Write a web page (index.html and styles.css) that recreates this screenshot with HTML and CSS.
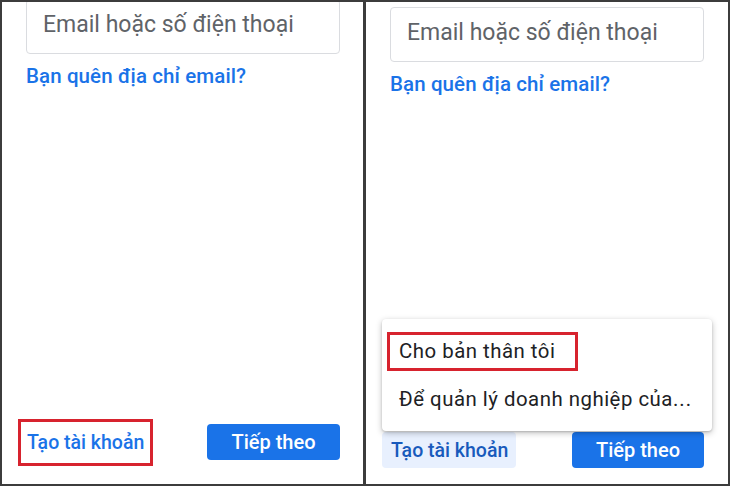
FILE: index.html
```html
<!DOCTYPE html>
<html lang="vi">
<head>
<meta charset="utf-8">
<link rel="stylesheet" href="styles.css">
</head>
<body>
<div class="frame">
  <section class="panel panel-left">
    <div class="field"><span class="placeholder">Email hoặc số điện thoại</span></div>
    <a class="forgot">Bạn quên địa chỉ email?</a>
    <div class="actions">
      <span class="create marked">Tạo tài khoản</span>
      <span class="next">Tiếp theo</span>
    </div>
  </section>
  <section class="panel panel-right">
    <div class="field"><span class="placeholder">Email hoặc số điện thoại</span></div>
    <a class="forgot">Bạn quên địa chỉ email?</a>
    <div class="actions">
      <span class="create active">Tạo tài khoản</span>
      <span class="next">Tiếp theo</span>
      <div class="menu">
        <div class="menu-item marked-item">Cho bản thân tôi</div>
        <div class="menu-item">Để quản lý doanh nghiệp của<span class="dots">...</span></div>
      </div>
    </div>
  </section>
</div>
</body>
</html>
```
FILE: styles.css
```css
* { box-sizing: border-box; }
html, body { margin: 0; padding: 0; }
body {
  width: 730px;
  height: 486px;
  background: #3c3c3c;
  font-family: Roboto, "Noto Sans", Arial, sans-serif;
  overflow: hidden;
}
.frame {
  display: flex;
  gap: 3px;
  padding: 2px;
  height: 486px;
}
.panel {
  background: #fff;
  height: 482px;
  display: flex;
  flex-direction: column;
  overflow: hidden;
  position: relative;
}
.panel-left {
  width: 361px;
  padding: 0 23px 24px 24px;
}
.panel-right {
  width: 362px;
  padding: 0 24px 16px 24px;
}
.field {
  height: 55px;
  border: 1px solid #dadce0;
  border-radius: 4px;
  display: flex;
  align-items: center;
  padding: 0 16px 4px;
  flex-shrink: 0;
}
.panel-left .field { margin-top: -3px; }
.panel-right .field { margin-top: 5px; }
.placeholder {
  font-size: 23px;
  color: #5f6368;
}
.forgot {
  margin-top: 10px;
  font-size: 20.5px;
  font-weight: 500;
  color: #1a73e8;
  letter-spacing: 0.1px;
}
.actions {
  margin-top: auto;
  display: flex;
  justify-content: space-between;
  align-items: center;
  position: relative;
}
.create {
  margin-left: -8px;
  height: 36px;
  padding: 0 8px 0 9px;
  display: flex;
  align-items: center;
  font-size: 19.5px;
  font-weight: 500;
  color: #1a73e8;
  border-radius: 4px;
  position: relative;
}
.create.active {
  background: #e8f0fe;
  color: #185abc;
}
.marked::after {
  content: "";
  position: absolute;
  left: 0;
  right: -1px;
  top: -5px;
  bottom: -6px;
  border: 3px solid #d7232e;
}
.next {
  width: 133px;
  height: 36px;
  background: #1a73e8;
  color: #fff;
  border-radius: 4px;
  display: flex;
  align-items: center;
  justify-content: center;
  font-size: 20px;
  font-weight: 500;
}
.panel-right .next { width: 132px; }
.menu {
  position: absolute;
  left: -8px;
  right: -8px;
  bottom: 37px;
  background: #fff;
  border-radius: 4px;
  box-shadow: 0 2px 6px rgba(0,0,0,0.25), 0 1px 2px rgba(0,0,0,0.15);
  padding: 8px 0;
}
.menu-item {
  height: 48px;
  display: flex;
  align-items: center;
  padding-left: 17px;
  font-size: 20.4px;
  letter-spacing: 0.5px;
  color: #202124;
  position: relative;
  white-space: nowrap;
}
.dots { letter-spacing: 1px; }
.marked-item::after {
  content: "";
  position: absolute;
  left: 5px;
  width: 185px;
  top: 5px;
  bottom: 4px;
  border: 3px solid #d7232e;
}
```
